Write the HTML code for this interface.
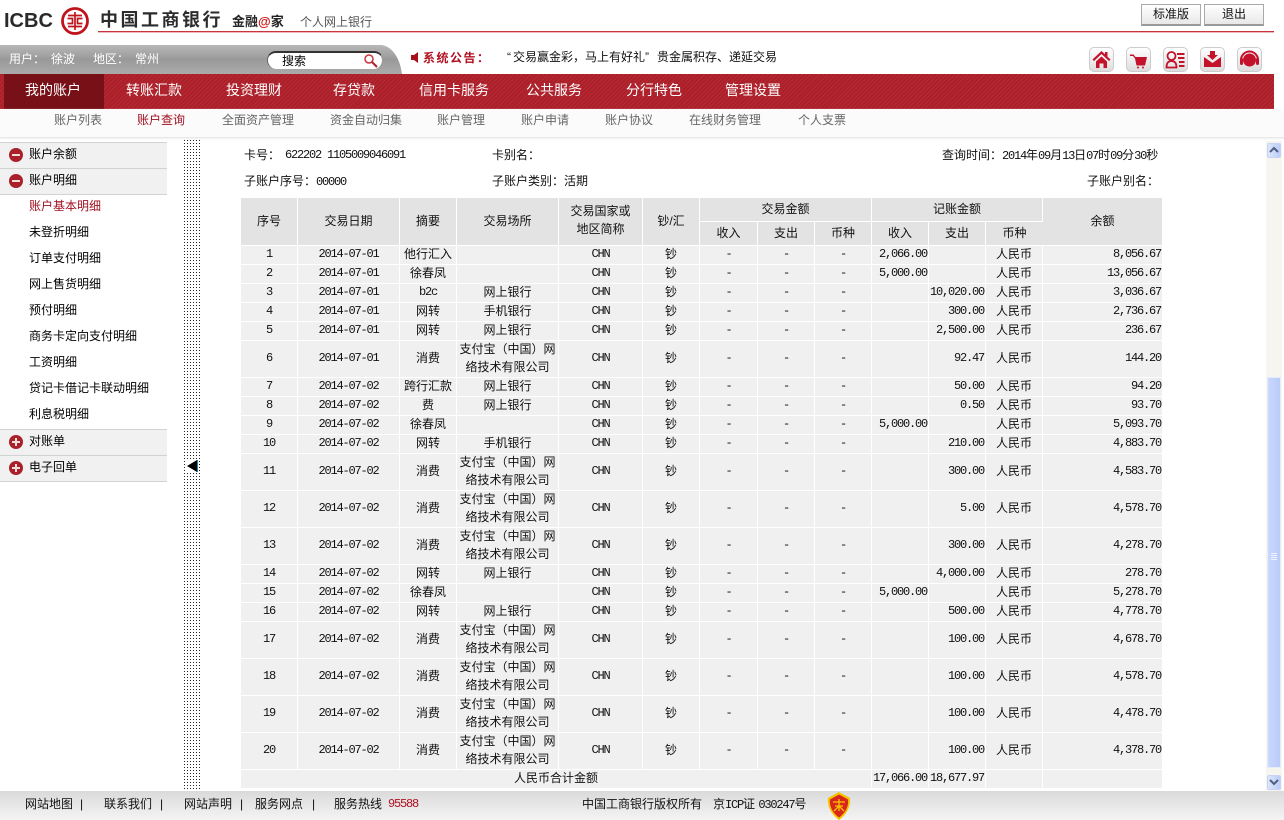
<!DOCTYPE html>
<html lang="zh"><head><meta charset="utf-8"><title>中国工商银行 个人网上银行</title>
<style>
html,body{margin:0;padding:0;background:#fff}
body{width:1284px;height:820px;position:relative;overflow:hidden;font:12px/16px "Liberation Sans","WenQuanYi Zen Hei","Noto Sans CJK SC",sans-serif;color:#111}
.a{position:absolute;white-space:nowrap}
.m{font-family:"Liberation Mono","WenQuanYi Zen Hei",monospace;font-size:12px;letter-spacing:-1.2px}
.q{display:inline-block;width:6px}
.nav{color:#fff;font-size:14px;top:82px}
.sub{color:#666;top:112px}
.side{left:0;width:167px;height:25px;background:#f1f1f1;border-top:1px solid #d2d2d2}
.it{left:29px;color:#000}
.c{left:9px;width:14px;height:14px;border-radius:50%;background:#a9202a;color:#fff}
.c:before{content:"";position:absolute;left:3px;top:6px;width:8px;height:2px;background:#f4dcdc}
.p:after{content:"";position:absolute;left:6px;top:3px;width:2px;height:8px;background:#f4dcdc}
.btn{top:4px;height:19px;border:1px solid #aaa;border-bottom:2px solid #999;background:linear-gradient(#fff,#e8e8e8);text-align:center;line-height:18px}
.tile{top:47px;width:25px;height:25px;box-sizing:border-box;border:1px solid #ccc;border-radius:5px;background:linear-gradient(#fff,#ddd)}
.tile svg{display:block}
table{position:absolute;left:241px;top:198px;width:921px;table-layout:fixed;border-collapse:separate;border-spacing:0;text-align:center;line-height:16px}
td{background:#f0f0f0;border-right:1px solid #fff;border-bottom:1px solid #fff;padding:0 0 2px;box-sizing:border-box;height:19px;white-space:nowrap}
td:last-child{border-right:0}
tr.h td{background:#e3e3e3}
tr.l td{height:37px;line-height:17.5px;padding-bottom:1px}
td.n,td.r,tr:nth-child(n+3) td:nth-child(n+7):nth-child(-n+9){font-family:"Liberation Mono",monospace;font-size:12px;letter-spacing:-1.2px}
td.r{text-align:right;padding-right:1px}
.f{top:796px}
</style></head><body>

<!-- header -->
<div class="a" style="left:4px;top:8px;font:bold 20px/26px 'Liberation Sans',sans-serif;color:#2a2a2a">ICBC</div>
<svg class="a" style="left:60px;top:6px" width="30" height="30" viewBox="0 0 30 30"><circle cx="15" cy="15" r="12.500" fill="none" stroke="#c0141c" stroke-width="2.800"/><path d="M8 9.500h14M8 20.500h14M15 6v18M7.500 12.500h5v5h-5M22.500 12.500h-5v5h5" fill="none" stroke="#c0141c" stroke-width="1.700"/></svg>
<div class="a" style="left:100px;top:9px;font-size:18px;line-height:22px;font-weight:bold;letter-spacing:2.500px;color:#2b2b2b">中国工商银行</div>
<div class="a" style="left:232px;top:14px;font-size:13px;font-weight:bold;color:#222">金融<span style="color:#d01818">@</span>家</div>
<div class="a" style="left:300px;top:14px;color:#555">个人网上银行</div>
<div class="a" style="left:98px;top:31px;width:1176px;height:1px;background:#c8343c;box-shadow:0 1px 0 #eeb8bb"></div>
<div class="a btn" style="left:1141px;width:58px">标准版</div>
<div class="a btn" style="left:1204px;width:58px">退出</div>

<!-- gray bar -->
<svg class="a" style="left:0;top:45px" width="403" height="29" viewBox="0 0 403 29"><defs><linearGradient id="g" x1="0" y1="0" x2="0" y2="1"><stop offset="0" stop-color="#b8b8b8"/><stop offset=".5" stop-color="#999"/><stop offset="1" stop-color="#ababab"/></linearGradient></defs><path d="M0 0H382C393 2 400 14 402 29H0Z" fill="url(#g)"/></svg>
<div class="a" style="left:9px;top:51px;color:#fff">用户：</div>
<div class="a" style="left:51px;top:51px;color:#fff">徐波</div>
<div class="a" style="left:93px;top:51px;color:#fff">地区：</div>
<div class="a" style="left:135px;top:51px;color:#fff">常州</div>
<div class="a" style="left:267px;top:51px;width:116px;height:18px;box-sizing:border-box;background:#fff;border-radius:9px;border-top:2px solid #333;border-left:1px solid #666;border-right:1px solid #999"></div>
<div class="a" style="left:282px;top:53px;color:#000">搜索</div>
<svg class="a" style="left:363px;top:53px" width="16" height="16" viewBox="0 0 16 16"><circle cx="6" cy="6" r="4" fill="none" stroke="#c8343c" stroke-width="1.500"/><path d="M9 9l5 5" stroke="#b02028" stroke-width="2"/></svg>

<!-- notice -->
<svg class="a" style="left:411px;top:52px" width="8" height="11" viewBox="0 0 8 11"><path d="M0 3h3l4-3v11l-4-3H0z" fill="#a8101c"/></svg>
<div class="a" style="left:423px;top:50px;color:#b01020;font-weight:bold;letter-spacing:1.500px">系统公告：</div>
<div class="a" style="left:507px;top:49px;color:#111"><span class="q">“</span>交易赢金彩，马上有好礼<span class="q">”</span><span class="q">&nbsp;</span>贵金属积存、递延交易</div>

<!-- tiles -->
<div class="a tile" style="left:1089px"><svg width="23" height="23" viewBox="0 0 23 23"><path d="M11.500 3L2.500 11.500l1.500 1.500 7.500-7 7.500 7 1.500-1.500-3-2.800V4h-2.500v2.300z" fill="#c4122a"/><path d="M6 13.500l5.500-5 5.500 5V20h-3.500v-4.500h-4V20H6z" fill="#c4122a"/></svg></div>
<div class="a tile" style="left:1126px"><svg width="23" height="23" viewBox="0 0 23 23"><path d="M3 6.500h3.500l2 2.500H20l-2 8.500H9.500L8 10.500 6 8H3z" fill="#c4122a"/><circle cx="11" cy="19.500" r="1" fill="#c4122a"/><circle cx="16" cy="19.500" r="1" fill="#c4122a"/></svg></div>
<div class="a tile" style="left:1163px"><svg width="23" height="23" viewBox="0 0 23 23"><path d="M7.500 4a3.500 3.500 0 0 1 0 8a3.500 3.500 0 0 1 0-8zM2.500 19.500c0-5 2-6.500 5-6.500s5 1.500 5 6.500z" fill="none" stroke="#c4122a" stroke-width="1.800"/><path d="M13 6h7.500M14 10h6.500M15 14h5.500M15 18h5.500" stroke="#c4122a" stroke-width="2"/></svg></div>
<div class="a tile" style="left:1200px"><svg width="23" height="23" viewBox="0 0 23 23"><path d="M9 3h5v4h3l-5.500 5L6 7h3z" fill="#c4122a"/><path d="M3 9l8.500 6L20 9v10H3z" fill="#c4122a"/></svg></div>
<div class="a tile" style="left:1237px"><svg width="23" height="23" viewBox="0 0 23 23"><circle cx="11.500" cy="12" r="6.500" fill="#c4122a"/><path d="M3 12a8.500 8.500 0 0 1 17 0" fill="none" stroke="#c4122a" stroke-width="2"/><rect x="2" y="10" width="3" height="7" rx="1.500" fill="#c4122a"/><rect x="18" y="10" width="3" height="7" rx="1.500" fill="#c4122a"/></svg></div>

<!-- nav -->
<div class="a" style="left:0;top:74px;width:1274px;height:35px;background:repeating-linear-gradient(135deg,#b62a32 0 1px,#aa1f29 1px 3px)"></div>
<div class="a" style="left:4px;top:74px;width:100px;height:35px;background:repeating-linear-gradient(135deg,#7e1016 0 1px,#741018 1px 3px)"></div>
<div class="a nav" style="left:25px">我的账户</div>
<div class="a nav" style="left:126px">转账汇款</div>
<div class="a nav" style="left:226px">投资理财</div>
<div class="a nav" style="left:333px">存贷款</div>
<div class="a nav" style="left:419px">信用卡服务</div>
<div class="a nav" style="left:526px">公共服务</div>
<div class="a nav" style="left:626px">分行特色</div>
<div class="a nav" style="left:725px">管理设置</div>

<!-- subnav -->
<div class="a" style="left:0;top:109px;width:1284px;height:28px;background:#fbfbfb;border-bottom:1px solid #e8e8e8;box-shadow:0 1px 2px #eee"></div>
<div class="a sub" style="left:54px">账户列表</div>
<div class="a sub" style="left:137px;color:#a01020">账户查询</div>
<div class="a sub" style="left:222px">全面资产管理</div>
<div class="a sub" style="left:330px">资金自动归集</div>
<div class="a sub" style="left:437px">账户管理</div>
<div class="a sub" style="left:521px">账户申请</div>
<div class="a sub" style="left:605px">账户协议</div>
<div class="a sub" style="left:689px">在线财务管理</div>
<div class="a sub" style="left:798px">个人支票</div>

<!-- sidebar -->
<div class="a side" style="top:142px"></div><div class="a c" style="top:148px"></div><div class="a it" style="top:146px">账户余额</div>
<div class="a side" style="top:168px;border-bottom:1px solid #d2d2d2"></div><div class="a c" style="top:174px"></div><div class="a it" style="top:172px">账户明细</div>
<div class="a it" style="top:198px;color:#a01020">账户基本明细</div>
<div class="a it" style="top:224px">未登折明细</div>
<div class="a it" style="top:250px">订单支付明细</div>
<div class="a it" style="top:276px">网上售货明细</div>
<div class="a it" style="top:302px">预付明细</div>
<div class="a it" style="top:328px">商务卡定向支付明细</div>
<div class="a it" style="top:354px">工资明细</div>
<div class="a it" style="top:380px">贷记卡借记卡联动明细</div>
<div class="a it" style="top:406px">利息税明细</div>
<div class="a side" style="top:429px"></div><div class="a c p" style="top:435px"></div><div class="a it" style="top:433px">对账单</div>
<div class="a side" style="top:455px;border-bottom:1px solid #d2d2d2"></div><div class="a c p" style="top:461px"></div><div class="a it" style="top:459px">电子回单</div>

<!-- splitter -->
<svg class="a" style="left:184px;top:140px" width="16" height="651"><defs><pattern id="d" width="3" height="3" patternUnits="userSpaceOnUse"><rect width="1" height="1" fill="#222"/></pattern></defs><rect width="16" height="651" fill="url(#d)"/><rect x="3" y="320" width="12" height="12" fill="#fff"/><path d="M3 326l10-6v12z" fill="#000"/><rect x="13" y="320" width="1" height="12" fill="#1a8ab0"/></svg>

<!-- info -->
<div class="a" style="left:244px;top:147px">卡号：</div>
<div class="a m" style="left:285px;top:147px">622202 1105009046091</div>
<div class="a" style="left:492px;top:147px">卡别名：</div>
<div class="a" style="left:942px;top:147px">查询时间：<span class="m">2014</span>年<span class="m">09</span>月<span class="m">13</span>日<span class="m">07</span>时<span class="m">09</span>分<span class="m">30</span>秒</div>
<div class="a" style="left:244px;top:173px">子账户序号：<span class="m">00000</span></div>
<div class="a" style="left:492px;top:173px">子账户类别：活期</div>
<div class="a" style="left:1087px;top:173px">子账户别名：</div>

<!-- table -->
<table>
<colgroup><col style="width:57px"><col style="width:102px"><col style="width:57px"><col style="width:102px"><col style="width:84px"><col style="width:57px"><col style="width:58px"><col style="width:57px"><col style="width:57px"><col style="width:57px"><col style="width:57px"><col style="width:57px"><col style="width:119px"></colgroup>
<tr class="h" style="height:24px"><td rowspan="2">序号</td><td rowspan="2">交易日期</td><td rowspan="2">摘要</td><td rowspan="2">交易场所</td><td rowspan="2" style="line-height:17.5px">交易国家或<br>地区简称</td><td rowspan="2">钞/汇</td><td colspan="3" style="height:24px">交易金额</td><td colspan="3" style="height:24px">记账金额</td><td rowspan="2">余额</td></tr>
<tr class="h" style="height:24px"><td style="height:24px">收入</td><td>支出</td><td>币种</td><td>收入</td><td>支出</td><td>币种</td></tr>
<tr><td class="n">1</td><td class="n">2014-07-01</td><td>他行汇入</td><td></td><td class="n">CHN</td><td>钞</td><td>-</td><td>-</td><td>-</td><td class="r">2,066.00</td><td></td><td>人民币</td><td class="r">8,056.67</td></tr>
<tr><td class="n">2</td><td class="n">2014-07-01</td><td>徐春凤</td><td></td><td class="n">CHN</td><td>钞</td><td>-</td><td>-</td><td>-</td><td class="r">5,000.00</td><td></td><td>人民币</td><td class="r">13,056.67</td></tr>
<tr><td class="n">3</td><td class="n">2014-07-01</td><td class="n">b2c</td><td>网上银行</td><td class="n">CHN</td><td>钞</td><td>-</td><td>-</td><td>-</td><td></td><td class="r">10,020.00</td><td>人民币</td><td class="r">3,036.67</td></tr>
<tr><td class="n">4</td><td class="n">2014-07-01</td><td>网转</td><td>手机银行</td><td class="n">CHN</td><td>钞</td><td>-</td><td>-</td><td>-</td><td></td><td class="r">300.00</td><td>人民币</td><td class="r">2,736.67</td></tr>
<tr><td class="n">5</td><td class="n">2014-07-01</td><td>网转</td><td>网上银行</td><td class="n">CHN</td><td>钞</td><td>-</td><td>-</td><td>-</td><td></td><td class="r">2,500.00</td><td>人民币</td><td class="r">236.67</td></tr>
<tr class="l"><td class="n">6</td><td class="n">2014-07-01</td><td>消费</td><td>支付宝（中国）网<br>络技术有限公司</td><td class="n">CHN</td><td>钞</td><td>-</td><td>-</td><td>-</td><td></td><td class="r">92.47</td><td>人民币</td><td class="r">144.20</td></tr>
<tr><td class="n">7</td><td class="n">2014-07-02</td><td>跨行汇款</td><td>网上银行</td><td class="n">CHN</td><td>钞</td><td>-</td><td>-</td><td>-</td><td></td><td class="r">50.00</td><td>人民币</td><td class="r">94.20</td></tr>
<tr><td class="n">8</td><td class="n">2014-07-02</td><td>费</td><td>网上银行</td><td class="n">CHN</td><td>钞</td><td>-</td><td>-</td><td>-</td><td></td><td class="r">0.50</td><td>人民币</td><td class="r">93.70</td></tr>
<tr><td class="n">9</td><td class="n">2014-07-02</td><td>徐春凤</td><td></td><td class="n">CHN</td><td>钞</td><td>-</td><td>-</td><td>-</td><td class="r">5,000.00</td><td></td><td>人民币</td><td class="r">5,093.70</td></tr>
<tr><td class="n">10</td><td class="n">2014-07-02</td><td>网转</td><td>手机银行</td><td class="n">CHN</td><td>钞</td><td>-</td><td>-</td><td>-</td><td></td><td class="r">210.00</td><td>人民币</td><td class="r">4,883.70</td></tr>
<tr class="l"><td class="n">11</td><td class="n">2014-07-02</td><td>消费</td><td>支付宝（中国）网<br>络技术有限公司</td><td class="n">CHN</td><td>钞</td><td>-</td><td>-</td><td>-</td><td></td><td class="r">300.00</td><td>人民币</td><td class="r">4,583.70</td></tr>
<tr class="l"><td class="n">12</td><td class="n">2014-07-02</td><td>消费</td><td>支付宝（中国）网<br>络技术有限公司</td><td class="n">CHN</td><td>钞</td><td>-</td><td>-</td><td>-</td><td></td><td class="r">5.00</td><td>人民币</td><td class="r">4,578.70</td></tr>
<tr class="l"><td class="n">13</td><td class="n">2014-07-02</td><td>消费</td><td>支付宝（中国）网<br>络技术有限公司</td><td class="n">CHN</td><td>钞</td><td>-</td><td>-</td><td>-</td><td></td><td class="r">300.00</td><td>人民币</td><td class="r">4,278.70</td></tr>
<tr><td class="n">14</td><td class="n">2014-07-02</td><td>网转</td><td>网上银行</td><td class="n">CHN</td><td>钞</td><td>-</td><td>-</td><td>-</td><td></td><td class="r">4,000.00</td><td>人民币</td><td class="r">278.70</td></tr>
<tr><td class="n">15</td><td class="n">2014-07-02</td><td>徐春凤</td><td></td><td class="n">CHN</td><td>钞</td><td>-</td><td>-</td><td>-</td><td class="r">5,000.00</td><td></td><td>人民币</td><td class="r">5,278.70</td></tr>
<tr><td class="n">16</td><td class="n">2014-07-02</td><td>网转</td><td>网上银行</td><td class="n">CHN</td><td>钞</td><td>-</td><td>-</td><td>-</td><td></td><td class="r">500.00</td><td>人民币</td><td class="r">4,778.70</td></tr>
<tr class="l"><td class="n">17</td><td class="n">2014-07-02</td><td>消费</td><td>支付宝（中国）网<br>络技术有限公司</td><td class="n">CHN</td><td>钞</td><td>-</td><td>-</td><td>-</td><td></td><td class="r">100.00</td><td>人民币</td><td class="r">4,678.70</td></tr>
<tr class="l"><td class="n">18</td><td class="n">2014-07-02</td><td>消费</td><td>支付宝（中国）网<br>络技术有限公司</td><td class="n">CHN</td><td>钞</td><td>-</td><td>-</td><td>-</td><td></td><td class="r">100.00</td><td>人民币</td><td class="r">4,578.70</td></tr>
<tr class="l"><td class="n">19</td><td class="n">2014-07-02</td><td>消费</td><td>支付宝（中国）网<br>络技术有限公司</td><td class="n">CHN</td><td>钞</td><td>-</td><td>-</td><td>-</td><td></td><td class="r">100.00</td><td>人民币</td><td class="r">4,478.70</td></tr>
<tr class="l"><td class="n">20</td><td class="n">2014-07-02</td><td>消费</td><td>支付宝（中国）网<br>络技术有限公司</td><td class="n">CHN</td><td>钞</td><td>-</td><td>-</td><td>-</td><td></td><td class="r">100.00</td><td>人民币</td><td class="r">4,378.70</td></tr>
<tr><td colspan="9">人民币合计金额</td><td class="r">17,066.00</td><td class="r">18,677.97</td><td></td><td></td></tr>
</table>

<!-- scrollbar -->
<div class="a" style="left:1266px;top:141px;width:16px;height:650px;background:#f6f5ef"></div>
<div class="a" style="left:1267px;top:143px;width:14px;height:15px;background:linear-gradient(90deg,#dce6fb,#bccdf6);border:1px solid #c5d4f5;box-sizing:border-box;border-radius:2px"></div>
<svg class="a" style="left:1268px;top:146px" width="12" height="9"><path d="M2 6l4-4 4 4" fill="none" stroke="#4d6185" stroke-width="2"/></svg>
<div class="a" style="left:1267px;top:377px;width:14px;height:391px;background:linear-gradient(90deg,#cad8fd,#b9cbf8);border:1px solid #e6ecfb;box-sizing:border-box"></div>
<svg class="a" style="left:1270px;top:552px" width="8" height="10"><path d="M1 1.500h6M1 3.500h6M1 5.500h6M1 7.500h6" stroke="#eef3ff"/></svg>
<div class="a" style="left:1267px;top:775px;width:14px;height:15px;background:linear-gradient(90deg,#dce6fb,#bccdf6);border:1px solid #c5d4f5;box-sizing:border-box;border-radius:2px"></div>
<svg class="a" style="left:1268px;top:778px" width="12" height="9"><path d="M2 2l4 4 4-4" fill="none" stroke="#4d6185" stroke-width="2"/></svg>

<!-- footer -->
<div class="a" style="left:0;top:791px;width:1284px;height:29px;background:linear-gradient(#dadada,#f4f4f4)"></div>
<div class="a f" style="left:25px">网站地图</div><div class="a f" style="left:80px">|</div>
<div class="a f" style="left:104px">联系我们</div><div class="a f" style="left:160px">|</div>
<div class="a f" style="left:184px">网站声明</div><div class="a f" style="left:240px">|</div>
<div class="a f" style="left:255px">服务网点</div><div class="a f" style="left:312px">|</div>
<div class="a f" style="left:334px">服务热线</div><div class="a f m" style="left:388px;color:#b01020">95588</div>
<div class="a f" style="left:582px">中国工商银行版权所有</div>
<div class="a f" style="left:713px">京<span class="m">ICP</span>证 <span class="m">030247</span>号</div>
<svg class="a" style="left:827px;top:792px" width="24" height="28" viewBox="0 0 24 28"><path d="M12 0L23 6C24 15 19 23 12 28C5 23 0 15 1 6Z" fill="#f5c400"/><path d="M12 2.500L21 7.500C22 15 17.500 21.500 12 25.500C6.500 21.500 2 15 3 7.500Z" fill="#d8261c"/><path d="M6 10h12M8 14h8M12 7v12M7 19l5-5 5 5" stroke="#f5c400" stroke-width="1.300" fill="none"/></svg>
</body></html>
